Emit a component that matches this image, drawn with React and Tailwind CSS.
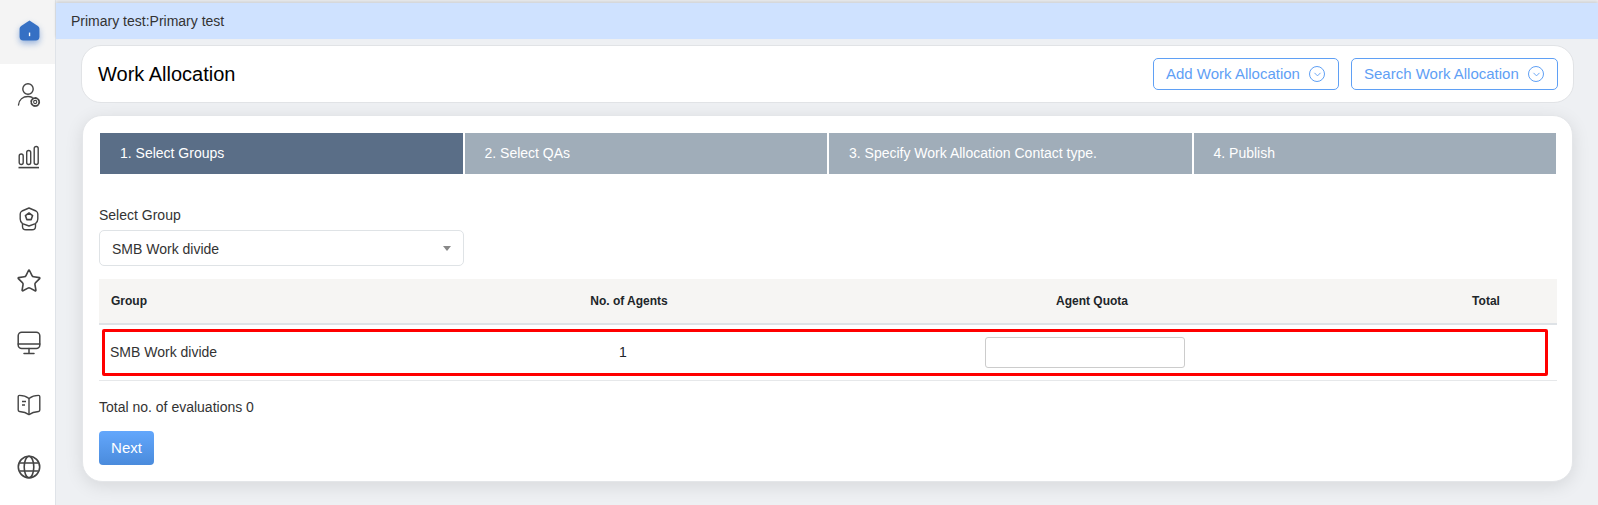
import React from 'react';
import { ChevronDown, Star } from 'lucide-react';

const HomeIcon = () => (
  <svg width="23" height="23" viewBox="0 0 22 22" className="drop-shadow-[0_3px_3px_rgba(40,100,190,0.45)]">
    <path d="M11 1.5 L19 6.6 Q20.5 7.6 20.5 9.4 V17 Q20.5 20.5 17 20.5 H5 Q1.5 20.5 1.5 17 V9.4 Q1.5 7.6 3 6.6 Z" fill="#3570c4" />
    <rect x="10.4" y="13" width="1.3" height="3.4" fill="#fff" />
  </svg>
);

const PersonGearIcon = () => (
  <svg width="24" height="26" viewBox="0 0 24 26" fill="none" stroke="#444" strokeWidth="1.4" strokeLinecap="round">
    <circle cx="11" cy="7" r="5.2" />
    <path d="M1.5 23 C2 17.5 6 14.5 11 14.5 C12.5 14.5 14 14.8 15.2 15.4" />
    <circle cx="18.2" cy="20" r="1.6" strokeWidth="1.1" />
    <circle cx="18.2" cy="20" r="4" strokeWidth="1.8" strokeDasharray="1.7 1.4" />
  </svg>
);

const BarsIcon = () => (
  <svg width="22" height="24" viewBox="0 0 22 24" fill="none" stroke="#444" strokeWidth="1.4">
    <rect x="1.2" y="9" width="4" height="10.5" rx="2" />
    <rect x="8.7" y="5.5" width="4" height="14" rx="2" />
    <rect x="16.2" y="1.5" width="4" height="18" rx="2" />
    <path d="M0.5 22.6 H21" strokeWidth="1.6" />
  </svg>
);

const BadgeIcon = () => (
  <svg width="20" height="24" viewBox="0 0 20 24" fill="none" stroke="#444" strokeWidth="1.4" strokeLinejoin="round">
    <path d="M10 1 L17 4 Q18.8 5 18.8 7 V12 Q18.8 15 16.5 16.6 L10 19 L3.5 16.6 Q1.2 15 1.2 12 V7 Q1.2 5 3 4 Z" />
    <path d="M10 6 L13.6 8.6 L12.2 12.6 H7.8 L6.4 8.6 Z" strokeWidth="1.6" />
    <path d="M3.5 17 V19.5 Q3.5 22.8 7 22.8 H13 Q16.5 22.8 16.5 19.5 V17" />
  </svg>
);

const MonitorIcon = () => (
  <svg width="24" height="24" viewBox="0 0 24 24" fill="none" stroke="#444" strokeWidth="1.5" strokeLinecap="round">
    <rect x="1.2" y="1.2" width="21.6" height="16.3" rx="3.5" />
    <path d="M1.2 13 H22.8" />
    <path d="M12 17.5 V22.6 M7 22.6 H17" />
  </svg>
);

const BookIcon = () => (
  <svg width="24" height="22" viewBox="0 0 24 22" fill="none" stroke="#444" strokeWidth="1.4" strokeLinejoin="round">
    <path d="M12 4.5 C9 2.2 5.5 1.4 2.5 1.4 Q1.2 1.4 1.2 2.8 V16 Q1.2 17.4 2.5 17.5 C6 17.8 9.5 18.8 12 20.6 C14.5 18.8 18 17.8 21.5 17.5 Q22.8 17.4 22.8 16 V2.8 Q22.8 1.4 21.5 1.4 C18.5 1.4 15 2.2 12 4.5 Z" />
    <path d="M12 4.5 V20.6" />
    <path d="M5 7.5 H9 M5 11 H8" />
  </svg>
);

const GlobeIcon = () => (
  <svg width="24" height="24" viewBox="0 0 24 24" fill="none" stroke="#444" strokeWidth="1.6">
    <circle cx="12" cy="12" r="10.7" />
    <ellipse cx="12" cy="12" rx="4.8" ry="10.7" />
    <path d="M2.4 8 H21.6 M2.4 16 H21.6" />
  </svg>
);

const navIcons = [
  <PersonGearIcon key="person" />,
  <BarsIcon key="bars" />,
  <BadgeIcon key="badge" />,
  <Star key="star" size={26} color="#444" strokeWidth={1.5} />,
  <MonitorIcon key="monitor" />,
  <BookIcon key="book" />,
  <GlobeIcon key="globe" />,
];

const steps = [
  '1. Select Groups',
  '2. Select QAs',
  '3. Specify Work Allocation Contact type.',
  '4. Publish',
];

const OutlineButton = ({ label, width }) => (
  <button
    type="button"
    className={`flex h-8 items-center justify-between rounded-[5px] border border-[#5fa0f5] bg-white pl-3 pr-[13px] text-[15px] text-[#5fa0f5] ${width}`}
  >
    {label}
    <span className="flex h-4 w-4 items-center justify-center rounded-full border border-[#5fa0f5]">
      <ChevronDown size={11} strokeWidth={2} />
    </span>
  </button>
);

export default function App() {
  return (
    <div className="flex h-[505px] w-[1598px] overflow-hidden bg-[#eef0f3] font-['Liberation_Sans',Arial,sans-serif] text-sm text-[#212529]">
      <aside className="flex w-14 shrink-0 flex-col border-r border-[#dfe3e8] bg-white">
        <div className="flex h-16 items-center justify-center bg-[#f4f4f4] pb-[4px] pl-[3px]">
          <HomeIcon />
        </div>
        <div className="flex flex-col pl-[3px]">
          {navIcons.map((icon, i) => (
            <div key={i} className="flex h-[62px] items-center justify-center">
              {icon}
            </div>
          ))}
        </div>
      </aside>

      <main className="flex min-w-0 flex-1 flex-col">
        <div className="mt-[3px] flex h-9 shrink-0 items-center bg-[#cfe2ff] pl-[15px] text-sm text-[#333] shadow-[0_-2px_3px_rgba(0,0,0,0.12)]">
          Primary test:Primary test
        </div>

        <header className="ml-[25px] mr-6 mt-[6px] flex h-[58px] shrink-0 items-center justify-between rounded-[20px] border border-[#e1e3e6] bg-white pl-4 pr-[15px]">
          <h1 className="text-xl text-black">Work Allocation</h1>
          <div className="flex gap-3">
            <OutlineButton label="Add Work Allocation" width="w-[186px]" />
            <OutlineButton label="Search Work Allocation" width="w-[207px]" />
          </div>
        </header>

        <section className="ml-[26px] mr-[25px] mt-3 h-[367px] shrink-0 rounded-[20px] border border-[#e4e6e9] bg-white pl-4 pr-4 pt-[17px] shadow-[0_4px_18px_rgba(0,0,0,0.1)]">
          <div className="ml-px grid h-[41px] w-[1456px] grid-cols-4 gap-[2px]">
            {steps.map((step, i) => (
              <div
                key={step}
                className={`flex items-center pb-[2px] pl-5 text-sm text-white ${i === 0 ? 'bg-[#5a6e87]' : 'bg-[#a0adb9]'}`}
              >
                {step}
              </div>
            ))}
          </div>

          <label className="mt-[33px] block text-sm leading-[17px] text-[#333]">Select Group</label>
          <div className="mt-[6px] flex h-9 w-[365px] items-center justify-between rounded-[5px] border border-[#dfe3e6] pl-3 pr-3 pt-px text-[#333]">
            SMB Work divide
            <span className="h-0 w-0 border-x-4 border-t-[5px] border-x-transparent border-t-[#888]" />
          </div>

          <table className="mt-[13px] w-[1458px] table-fixed border-collapse">
            <thead>
              <tr className="h-[45px] border-b-2 border-[#dee2e6] bg-[#f6f5f3] text-xs font-bold">
                <th className="w-[390px] pl-3 text-left">Group</th>
                <th className="w-[280px] text-center">No. of Agents</th>
                <th className="w-[646px] text-center">Agent Quota</th>
                <th className="text-center">Total</th>
              </tr>
            </thead>
            <tbody>
              <tr className="relative h-[56px] border-b border-[#e6e8ea]">
                <td className="pl-[11px] text-[#333]">
                  SMB Work divide
                  <span className="absolute left-[3px] top-[5px] h-[47px] w-[1446px] rounded-[2px] border-[3px] border-[#ff0000]" />
                </td>
                <td className="pl-[130px]">1</td>
                <td className="pl-[216px]">
                  <input type="text" className="block h-[31px] w-[200px] rounded-[3px] border border-[#ccc] bg-white" />
                </td>
                <td />
              </tr>
            </tbody>
          </table>

          <p className="mt-[18px] leading-[17px] text-[#333]">Total no. of evaluations 0</p>
          <button
            type="button"
            className="mt-[15px] block h-[34px] w-[55px] rounded-[4px] bg-gradient-to-b from-[#63a7fc] to-[#4a8bdc] text-[15px] text-white"
          >
            Next
          </button>
        </section>
      </main>
    </div>
  );
}
